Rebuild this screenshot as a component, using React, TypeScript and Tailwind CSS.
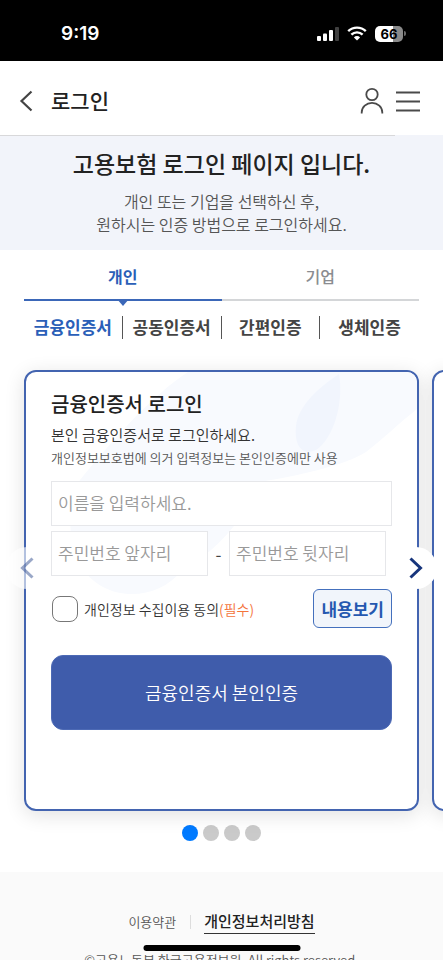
import { useState } from 'react';

const USER_TABS = [
  { id: 'personal', label: '개인' },
  { id: 'company', label: '기업' },
];

const AUTH_METHODS = ['금융인증서', '공동인증서', '간편인증', '생체인증'];

function StatusBar() {
  return (
    <div className="flex h-[61px] shrink-0 items-center justify-between bg-black pt-1.5 pr-[37px] pl-[61px] text-white">
      <span className="font-['Inter','Liberation_Sans',sans-serif] text-[19px] leading-6 font-semibold">9:19</span>
      <div className="flex items-center gap-2">
        {/* Signal */}
        <svg width="23" height="16" viewBox="0 0 23 16" fill="#fff">
          <rect x="1" y="10" width="4" height="5" rx="1" />
          <rect x="7" y="7.5" width="4" height="7.5" rx="1" />
          <rect x="13" y="4" width="4" height="11" rx="1" />
          <rect x="19" y="1" width="4" height="14" rx="1" opacity="0.25" />
        </svg>
        {/* Wifi */}
        <svg width="20" height="15" viewBox="0 0 20 15" fill="none" stroke="#fff" strokeWidth="2.4">
          <path d="M1.2 5.2a12.6 12.6 0 0 1 17.6 0" />
          <path d="M4.4 8.7a8 8 0 0 1 11.2 0" />
          <path d="M10 14.6l-3.1-3.2a4.4 4.4 0 0 1 6.2 0z" fill="#fff" stroke="none" />
        </svg>
        {/* Battery */}
        <div className="flex items-center gap-px">
          <span className="flex h-4 w-7 items-center justify-center rounded-[5px] bg-linear-to-r from-white from-66% to-[#8a8a8a] to-66% font-['Inter','Liberation_Sans',sans-serif] text-[13px] leading-4 font-bold text-black">
            66
          </span>
          <span className="h-[5px] w-[2px] rounded-r-full bg-[#6b6b6b]" />
        </div>
      </div>
    </div>
  );
}

function PageHeader() {
  return (
    <header className="shrink-0 bg-[#f2f4fa]">
      <div className="flex h-[74px] items-center bg-white pt-1.5 pr-[23px] pl-[19px]">
        <button type="button" aria-label="뒤로" className="mr-[17px]">
          <svg width="15" height="22" viewBox="0 0 15 22" fill="none" stroke="#444" strokeWidth="2.2">
            <path d="M12.5 1.5L2.5 11l10 9.5" />
          </svg>
        </button>
        <h1 className="pb-0.5 text-[21px] leading-7 font-medium text-[#222]">로그인</h1>
        <div className="ml-auto flex items-center gap-3">
          <button type="button" aria-label="내 정보">
            <svg width="24" height="28" viewBox="0 0 24 28" fill="none" stroke="#4a4a4a" strokeWidth="1.8">
              <circle cx="12" cy="7.5" r="5.7" />
              <path d="M1.7 26.5v-1a10.3 9.6 0 0 1 20.6 0v1" />
            </svg>
          </button>
          <button type="button" aria-label="메뉴">
            <svg width="24" height="22" viewBox="0 0 24 22" stroke="#4a4a4a" strokeWidth="1.8">
              <path d="M0 2.5h24M0 11.5h24M0 20.5h24" />
            </svg>
          </button>
        </div>
      </div>
      <div className="mr-12 h-px bg-[#d8d8da]" />
    </header>
  );
}

/* Pale leaf behind the card content */
function LeafBackground() {
  return (
    <svg className="pointer-events-none absolute inset-0 -z-10 h-full w-full" viewBox="0 0 391 437" preserveAspectRatio="none">
      <path
        d="M162 0C125 24 85 70 54 108C40 130 42 172 54 192C74 230 130 232 156 198C192 178 216 150 234 110C270 104 318 94 340 80C356 68 372 52 391 37V0Z"
        fill="#f8fafe"
      />
      <path d="M313 2C292 16 272 34 270 54C268 74 276 84 290 78C308 66 318 30 313 2Z" fill="#f1f5fd" />
    </svg>
  );
}

function LoginCard() {
  const [agreed, setAgreed] = useState(false);

  return (
    <form
      className="relative isolate w-full shrink-0 overflow-hidden rounded-xl border-2 border-[#4364b0] bg-white px-[25px] pt-[17px] pb-[79px]"
      onSubmit={(e) => e.preventDefault()}
    >
      <LeafBackground />
      <h3 className="text-xl leading-[30px] font-medium text-[#222]">금융인증서 로그인</h3>
      <p className="mt-1 text-[15px] leading-6 font-[350] text-[#333]">본인 금융인증서로 로그인하세요.</p>
      <p className="text-[13px] leading-[22px] font-[350] text-[#555]">
        개인정보보호법에 의거 입력정보는 본인인증에만 사용
      </p>

      <input
        type="text"
        aria-label="이름"
        placeholder="이름을 입력하세요."
        className="mt-3 block h-[45px] w-full border border-[#e6e7ea] bg-white px-1.5 pb-0.5 text-[17px] font-[350] placeholder:text-[#999]"
      />
      <div className="mt-[5px] flex items-center pr-1.5">
        <input
          type="text"
          aria-label="주민번호 앞자리"
          placeholder="주민번호 앞자리"
          className="h-[45px] min-w-0 flex-1 border border-[#e6e7ea] bg-white px-1.5 pb-0.5 text-[17px] font-[350] placeholder:text-[#999]"
        />
        <span className="w-[21px] text-center text-[17px] text-[#444]">-</span>
        <input
          type="password"
          aria-label="주민번호 뒷자리"
          placeholder="주민번호 뒷자리"
          className="h-[45px] min-w-0 flex-1 border border-[#e6e7ea] bg-white px-1.5 pb-0.5 text-[17px] font-[350] placeholder:text-[#999]"
        />
      </div>

      <div className="mt-[13px] flex items-center justify-between">
        <label className="flex items-center gap-1.5 text-sm font-[350] text-[#333]">
          <input
            type="checkbox"
            checked={agreed}
            onChange={(e) => setAgreed(e.target.checked)}
            className="ml-px size-[26px] appearance-none rounded-lg border border-[#777] bg-white checked:bg-[#3f5cab]"
          />
          <span>
            개인정보 수집이용 동의<span className="text-[#f4743b]">(필수)</span>
          </span>
        </label>
        <button
          type="button"
          className="h-[39px] rounded-md border border-[#4470bd] bg-[#f1f5fb] px-[7px] text-[17px] font-bold text-[#2558b0]"
        >
          내용보기
        </button>
      </div>

      <button
        type="submit"
        className="mt-[27px] h-[75px] w-full rounded-xl border border-[#4d6ab5] bg-[#3f5cab] pb-0.5 text-lg font-[350] text-white"
      >
        금융인증서 본인인증
      </button>
    </form>
  );
}

export default function App() {
  const [activeTab, setActiveTab] = useState('personal');
  const [activeMethod, setActiveMethod] = useState(0);

  return (
    <div className="relative flex h-screen flex-col overflow-hidden bg-white font-['Noto_Sans_CJK_KR',sans-serif]">
      <StatusBar />
      <PageHeader />

      {/* Page intro */}
      <section className="shrink-0 bg-[#f2f4fa] pt-[11px] pb-3.5 text-center">
        <h2 className="text-[23px] leading-8 font-medium text-[#222]">고용보험 로그인 페이지 입니다.</h2>
        <p className="mt-[11px] text-base leading-[23px] font-[350] text-[#555]">
          개인 또는 기업을 선택하신 후,
          <br />
          원하시는 인증 방법으로 로그인하세요.
        </p>
      </section>

      <main className="shrink-0 px-6">
        {/* Member type */}
        <div className="flex" role="tablist">
          {USER_TABS.map((tab) => (
            <button
              key={tab.id}
              type="button"
              role="tab"
              aria-selected={activeTab === tab.id}
              onClick={() => setActiveTab(tab.id)}
              className={
                activeTab === tab.id
                  ? 'relative h-[51px] flex-1 border-b-2 border-[#3b67b8] pt-0.5 text-base font-bold text-[#2b5fb8]'
                  : 'relative h-[51px] flex-1 border-b-2 border-[#d4d6d8] pt-0.5 text-base font-medium text-[#8a8c90]'
              }
            >
              {tab.label}
              {activeTab === tab.id && (
                <svg className="absolute top-full left-1/2 -translate-x-1/2" width="12" height="7" viewBox="0 0 12 7" fill="#3b67b8">
                  <path d="M0 0h12L6 7z" />
                </svg>
              )}
            </button>
          ))}
        </div>

        {/* Certificate type */}
        <div className="mt-[15px] grid grid-cols-4 divide-x divide-[#555]">
          {AUTH_METHODS.map((method, i) => (
            <button
              key={method}
              type="button"
              onClick={() => setActiveMethod(i)}
              className={
                activeMethod === i
                  ? 'pb-0.5 text-[17px] leading-[21px] font-bold whitespace-nowrap text-[#2b5fb8]'
                  : 'pb-0.5 text-[17px] leading-[21px] font-bold whitespace-nowrap text-[#444]'
              }
            >
              {method}
            </button>
          ))}
        </div>

        {/* Card slider */}
        <div className="relative mt-[31px]">
          <div className="flex gap-[13px]">
            <div className="flex w-full shrink-0 rounded-xl shadow-[0_4px_20px_rgba(0,0,0,0.12)]">
              <LoginCard />
            </div>
            <div className="w-full shrink-0 rounded-xl border-2 border-[#4364b0] bg-white shadow-[0_4px_20px_rgba(0,0,0,0.12)]" />
          </div>
          <button
            type="button"
            aria-label="이전"
            className="absolute top-[177px] -left-[18px] flex size-[42px] items-center justify-center rounded-full bg-white/60"
          >
            <svg width="14" height="22" viewBox="0 0 14 22" fill="none" stroke="#1f3d85" strokeWidth="3" opacity="0.45">
              <path d="M12.5 1.5L2.5 11l10 9.5" />
            </svg>
          </button>
          <button
            type="button"
            aria-label="다음"
            className="absolute top-[177px] -right-[18px] flex size-[42px] items-center justify-center rounded-full bg-white"
          >
            <svg width="14" height="22" viewBox="0 0 14 22" fill="none" stroke="#17357c" strokeWidth="3">
              <path d="M1.5 1.5l10 9.5l-10 9.5" />
            </svg>
          </button>
        </div>

        <div className="mt-3.5 mb-[31px] flex justify-center gap-[5px]">
          {AUTH_METHODS.map((method, i) => (
            <button
              key={method}
              type="button"
              aria-label={method}
              onClick={() => setActiveMethod(i)}
              className={activeMethod === i ? 'size-4 rounded-full bg-[#007aff]' : 'size-4 rounded-full bg-[#cacaca]'}
            />
          ))}
        </div>
      </main>

      <footer className="flex shrink-0 flex-col items-center bg-[#fafafa] pt-[37px] pb-10">
        <div className="flex items-center">
          <a href="#terms" className="text-[13px] leading-6 font-[350] text-[#555]">
            이용약관
          </a>
          <span className="mr-[13px] ml-3.5 h-[14px] w-px bg-[#ddd]" />
          <a href="#privacy" className="border-b border-[#333] text-[15px] leading-6 font-medium text-[#222]">
            개인정보처리방침
          </a>
        </div>
        <p className="mt-3.5 text-[13px] leading-6 font-[350] text-[#555]">
          ©고용노동부 한국고용정보원. All rights reserved.
        </p>
      </footer>

      {/* Home indicator */}
      <div className="absolute bottom-[9px] left-1/2 h-1.5 w-[157px] -translate-x-1/2 rounded-full bg-black" />
    </div>
  );
}
